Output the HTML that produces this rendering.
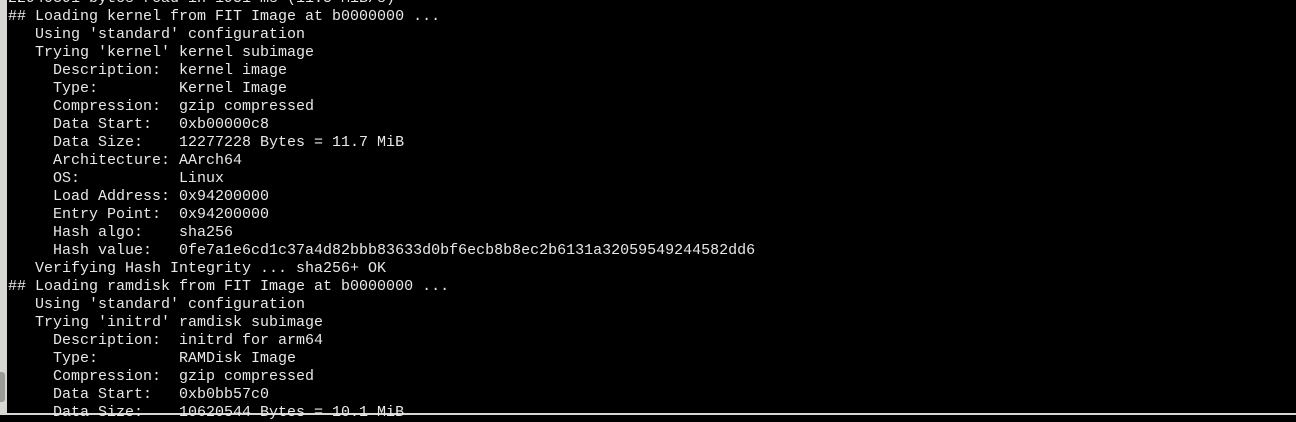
<!DOCTYPE html>
<html><head><meta charset="utf-8"><style>
html,body{margin:0;padding:0;}
body{width:1296px;height:415px;background:#000;position:relative;overflow:hidden;}
.l{position:absolute;left:0;top:0;width:7px;height:415px;background:#d6d6d2;}
.sb{position:absolute;left:0;top:372px;width:5px;height:30px;background:#9a9a96;border-radius:0 3px 3px 0;}
.b{position:absolute;left:0;top:413px;width:1296px;height:2px;background:#d6d6d2;}
pre{position:absolute;left:8px;top:-10px;margin:0;font-family:"Liberation Mono","DejaVu Sans Mono",monospace;font-size:15px;line-height:18px;color:#e8e8e8;}
</style></head><body>
<div class="l"></div><div class="sb"></div><div class="b"></div>
<pre>22940391 bytes read in 1951 ms (11.5 MiB/s)
## Loading kernel from FIT Image at b0000000 ...
   Using 'standard' configuration
   Trying 'kernel' kernel subimage
     Description:  kernel image
     Type:         Kernel Image
     Compression:  gzip compressed
     Data Start:   0xb00000c8
     Data Size:    12277228 Bytes = 11.7 MiB
     Architecture: AArch64
     OS:           Linux
     Load Address: 0x94200000
     Entry Point:  0x94200000
     Hash algo:    sha256
     Hash value:   0fe7a1e6cd1c37a4d82bbb83633d0bf6ecb8b8ec2b6131a32059549244582dd6
   Verifying Hash Integrity ... sha256+ OK
## Loading ramdisk from FIT Image at b0000000 ...
   Using 'standard' configuration
   Trying 'initrd' ramdisk subimage
     Description:  initrd for arm64
     Type:         RAMDisk Image
     Compression:  gzip compressed
     Data Start:   0xb0bb57c0
     Data Size:    10620544 Bytes = 10.1 MiB</pre>
</body></html>
